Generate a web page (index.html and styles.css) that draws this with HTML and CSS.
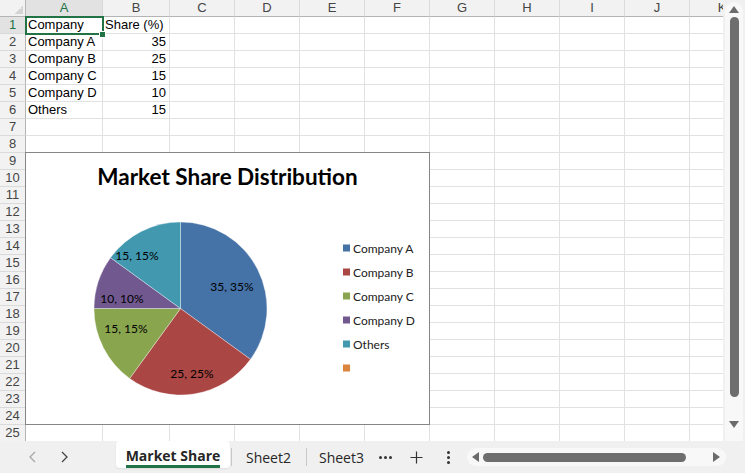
FILE: index.html
```html
<!DOCTYPE html>
<html>
<head>
<meta charset="utf-8">
<link rel="stylesheet" href="styles.css">
</head>
<body>
<div class="app">
  <div class="main">
    <div class="sheet">
      <div class="row hdr"><span class="corner"></span><span class="selh">A</span><span>B</span><span>C</span><span>D</span><span>E</span><span>F</span><span>G</span><span>H</span><span>I</span><span>J</span><span>K</span></div>
      <div class="row"><span class="rh selh">1</span><span>Company</span><span>Share (%)</span><span></span><span></span><span></span><span></span><span></span><span></span><span></span><span></span><span></span></div>
      <div class="row"><span class="rh">2</span><span>Company A</span><span class="num">35</span><span></span><span></span><span></span><span></span><span></span><span></span><span></span><span></span><span></span></div>
      <div class="row"><span class="rh">3</span><span>Company B</span><span class="num">25</span><span></span><span></span><span></span><span></span><span></span><span></span><span></span><span></span><span></span></div>
      <div class="row"><span class="rh">4</span><span>Company C</span><span class="num">15</span><span></span><span></span><span></span><span></span><span></span><span></span><span></span><span></span><span></span></div>
      <div class="row"><span class="rh">5</span><span>Company D</span><span class="num">10</span><span></span><span></span><span></span><span></span><span></span><span></span><span></span><span></span><span></span></div>
      <div class="row"><span class="rh">6</span><span>Others</span><span class="num">15</span><span></span><span></span><span></span><span></span><span></span><span></span><span></span><span></span><span></span></div>
      <div class="row"><span class="rh">7</span><span></span><span></span><span></span><span></span><span></span><span></span><span></span><span></span><span></span><span></span><span></span></div>
      <div class="row"><span class="rh">8</span><span></span><span></span><span></span><span></span><span></span><span></span><span></span><span></span><span></span><span></span><span></span></div>
      <div class="row"><span class="rh">9</span><span></span><span></span><span></span><span></span><span></span><span></span><span></span><span></span><span></span><span></span><span></span></div>
      <div class="row"><span class="rh">10</span><span></span><span></span><span></span><span></span><span></span><span></span><span></span><span></span><span></span><span></span><span></span></div>
      <div class="row"><span class="rh">11</span><span></span><span></span><span></span><span></span><span></span><span></span><span></span><span></span><span></span><span></span><span></span></div>
      <div class="row"><span class="rh">12</span><span></span><span></span><span></span><span></span><span></span><span></span><span></span><span></span><span></span><span></span><span></span></div>
      <div class="row"><span class="rh">13</span><span></span><span></span><span></span><span></span><span></span><span></span><span></span><span></span><span></span><span></span><span></span></div>
      <div class="row"><span class="rh">14</span><span></span><span></span><span></span><span></span><span></span><span></span><span></span><span></span><span></span><span></span><span></span></div>
      <div class="row"><span class="rh">15</span><span></span><span></span><span></span><span></span><span></span><span></span><span></span><span></span><span></span><span></span><span></span></div>
      <div class="row"><span class="rh">16</span><span></span><span></span><span></span><span></span><span></span><span></span><span></span><span></span><span></span><span></span><span></span></div>
      <div class="row"><span class="rh">17</span><span></span><span></span><span></span><span></span><span></span><span></span><span></span><span></span><span></span><span></span><span></span></div>
      <div class="row"><span class="rh">18</span><span></span><span></span><span></span><span></span><span></span><span></span><span></span><span></span><span></span><span></span><span></span></div>
      <div class="row"><span class="rh">19</span><span></span><span></span><span></span><span></span><span></span><span></span><span></span><span></span><span></span><span></span><span></span></div>
      <div class="row"><span class="rh">20</span><span></span><span></span><span></span><span></span><span></span><span></span><span></span><span></span><span></span><span></span><span></span></div>
      <div class="row"><span class="rh">21</span><span></span><span></span><span></span><span></span><span></span><span></span><span></span><span></span><span></span><span></span><span></span></div>
      <div class="row"><span class="rh">22</span><span></span><span></span><span></span><span></span><span></span><span></span><span></span><span></span><span></span><span></span><span></span></div>
      <div class="row"><span class="rh">23</span><span></span><span></span><span></span><span></span><span></span><span></span><span></span><span></span><span></span><span></span><span></span></div>
      <div class="row"><span class="rh">24</span><span></span><span></span><span></span><span></span><span></span><span></span><span></span><span></span><span></span><span></span><span></span></div>
      <div class="row"><span class="rh">25</span><span></span><span></span><span></span><span></span><span></span><span></span><span></span><span></span><span></span><span></span><span></span></div>

      <div class="selbox"></div>
      <div class="handle"></div>

      <div class="chart">
        <div class="chart-title">Market Share Distribution</div>
        <svg class="chart-svg" width="403" height="229" viewBox="0 0 403 229">
          <g class="slices">
            <path d="M154.5 113.5 L154.5 27 A86.5 86.5 0 0 1 224.48 164.35 Z" fill="#4572A7"/>
            <path d="M154.5 113.5 L224.48 164.35 A86.5 86.5 0 0 1 103.65 183.48 Z" fill="#AA4643"/>
            <path d="M154.5 113.5 L103.65 183.48 A86.5 86.5 0 0 1 68 113.5 Z" fill="#89A54E"/>
            <path d="M154.5 113.5 L68 113.5 A86.5 86.5 0 0 1 84.52 62.65 Z" fill="#71588F"/>
            <path d="M154.5 113.5 L84.52 62.65 A86.5 86.5 0 0 1 154.5 27 Z" fill="#4198AF"/>
          </g>
          <g class="labels">
            <text x="206" y="91">35, 35%</text>
            <text x="166" y="178">25, 25%</text>
            <text x="100" y="133">15, 15%</text>
            <text x="96" y="103">10, 10%</text>
            <text x="111" y="60">15, 15%</text>
          </g>
          <g class="legend">
            <rect x="317" y="49.5" width="7" height="7" fill="#4572A7"/>
            <text x="327" y="53">Company A</text>
            <rect x="317" y="73.5" width="7" height="7" fill="#AA4643"/>
            <text x="327" y="77">Company B</text>
            <rect x="317" y="97.5" width="7" height="7" fill="#89A54E"/>
            <text x="327" y="101">Company C</text>
            <rect x="317" y="121.5" width="7" height="7" fill="#71588F"/>
            <text x="327" y="125">Company D</text>
            <rect x="317" y="145.5" width="7" height="7" fill="#4198AF"/>
            <text x="327" y="149">Others</text>
            <rect x="317" y="169.5" width="7" height="7" fill="#DB843D"/>
          </g>
        </svg>
      </div>
    </div>
    <div class="vscroll">
      <div class="vpill">
        <svg class="arrow-up" width="10" height="7" viewBox="0 0 10 7"><path d="M5 0 L10 7 L0 7 Z" fill="#6b6b6b"/></svg>
        <div class="vthumb"></div>
        <div class="vspace"></div>
        <svg class="arrow-down" width="10" height="7" viewBox="0 0 10 7"><path d="M0 0 L10 0 L5 7 Z" fill="#6b6b6b"/></svg>
      </div>
    </div>
  </div>
  <div class="tabs">
    <div class="nav nav-first"><svg width="7" height="12" viewBox="0 0 7 12"><path d="M6 1 L1 6 L6 11" fill="none" stroke="#a8a8a8" stroke-width="1.3"/></svg></div>
    <div class="nav"><svg width="7" height="12" viewBox="0 0 7 12"><path d="M1 1 L6 6 L1 11" fill="none" stroke="#444" stroke-width="1.3"/></svg></div>
    <div class="tab tab-active"><span class="tab-label">Market Share</span></div>
    <div class="sep"></div>
    <div class="tab tab-2">Sheet2</div>
    <div class="sep"></div>
    <div class="tab tab-3">Sheet3</div>
    <div class="more"><span></span><span></span><span></span></div>
    <div class="plus"><svg width="13" height="13" viewBox="0 0 13 13"><path d="M6.5 0.5 V12.5 M0.5 6.5 H12.5" stroke="#333" stroke-width="1.2"/></svg></div>
    <div class="vdots"><span></span><span></span><span></span></div>
    <div class="hpill">
      <svg width="7" height="10" viewBox="0 0 7 10"><path d="M7 0 L7 10 L0 5 Z" fill="#6b6b6b"/></svg>
      <div class="hthumb"></div>
      <svg width="7" height="10" viewBox="0 0 7 10"><path d="M0 0 L7 5 L0 10 Z" fill="#6b6b6b"/></svg>
    </div>
  </div>
</div>
</body>
</html>
```

FILE: styles.css
```css
* { box-sizing: border-box; }

body {
  margin: 0;
  width: 745px;
  height: 473px;
  overflow: hidden;
  background: #fff;
  font-family: "Liberation Sans", Arial, sans-serif;
}

.app {
  display: flex;
  flex-direction: column;
  height: 473px;
}

.main {
  display: flex;
  height: 441px;
}

.sheet {
  position: relative;
  width: 723px;
  height: 441px;
  overflow: hidden;
}

.row {
  display: grid;
  grid-template-columns: 26px 77px 67px repeat(9, 65px);
  height: 17px;
}

.row > span {
  border-right: 1px solid #e1e1e1;
  border-bottom: 1px solid #e1e1e1;
  font-size: 13px;
  line-height: 16px;
  padding: 0 2px;
  white-space: nowrap;
  overflow: hidden;
  color: #000;
}

.row > span.num {
  text-align: right;
  padding-right: 3px;
}

.hdr > span {
  background: #f2f2f2;
  border-bottom-color: #b4b4b4;
  border-right-color: #dadada;
  text-align: center;
  color: #454545;
}

.row > span.rh {
  background: #f2f2f2;
  text-align: center;
  color: #454545;
  border-right-color: #b4b4b4;
  border-bottom-color: #dadada;
  padding: 0;
}

.hdr > span.corner {
  border-right-color: #b4b4b4;
  background: #f2f2f2 linear-gradient(135deg, transparent 50%, #d4d4d4 50%) no-repeat right 2px bottom 2px / 8px 8px;
}

.row > span.selh {
  background-color: #e2e2e2;
  color: #217346;
}

.selbox {
  position: absolute;
  left: 25px;
  top: 16px;
  width: 79px;
  height: 19px;
  border: 2px solid #217346;
}

.handle {
  position: absolute;
  left: 99px;
  top: 31px;
  width: 7px;
  height: 7px;
  background: #217346;
  border: 1px solid #fff;
}

.chart {
  position: absolute;
  left: 25px;
  top: 152px;
  width: 405px;
  height: 273px;
  background: #fff;
  border: 1px solid #868686;
  display: flex;
  flex-direction: column;
}

.chart-title {
  height: 42px;
  padding-top: 12px;
  text-align: center;
  font-family: Lato, "Liberation Sans", sans-serif;
  font-weight: bold;
  font-size: 22.5px;
  line-height: 24px;
  color: #000;
}

.chart-svg {
  display: block;
}

.slices path {
  stroke: #fff;
  stroke-opacity: 0.45;
  stroke-width: 0.8;
}

.labels text {
  font-family: Lato, "Liberation Sans", sans-serif;
  font-size: 12px;
  fill: #000;
  text-anchor: middle;
  dominant-baseline: central;
}

.legend text {
  font-family: Lato, "Liberation Sans", sans-serif;
  font-size: 12px;
  fill: #222;
  dominant-baseline: central;
}

.vscroll {
  width: 22px;
  height: 441px;
  background: #f0f0f0;
  padding: 2px 2px 0 2px;
}

.vpill {
  height: 446px;
  background: #f8f8f8;
  border-radius: 9px;
  display: flex;
  flex-direction: column;
  align-items: center;
  padding-top: 4px;
}

.arrow-up { display: block; }

.vthumb {
  margin-top: 4px;
  width: 9px;
  height: 380px;
  background: #6e6e6e;
  border-radius: 5px;
}

.vspace { flex: 0 0 24px; }

.arrow-down { display: block; }

.tabs {
  height: 32px;
  background: #f0f0f0;
  display: flex;
  align-items: center;
  font-family: "Open Sans", "Liberation Sans", sans-serif;
  color: #262626;
}

.nav {
  width: 32px;
  height: 24px;
  display: flex;
  align-items: center;
  justify-content: center;
}

.nav-first { margin-left: 16px; }

.tab {
  height: 27px;
  display: flex;
  align-items: center;
  justify-content: center;
  font-size: 14px;
}

.tab-active {
  align-self: flex-start;
  margin-left: 36px;
  width: 114px;
  background: #fff;
  border-radius: 4px;
  font-weight: bold;
  box-shadow: 0 1px 2px rgba(0,0,0,0.08);
}

.tab-label {
  border-bottom: 3px solid #217346;
  line-height: 19px;
  padding-top: 2px;
  margin-top: 2px;
}

.sep {
  width: 1px;
  height: 18px;
  background: #c8c8c8;
  margin-left: 1px;
}

.tab-2 { width: 73px; }
.tab-3 { width: 69px; }

.more {
  width: 24px;
  display: flex;
  justify-content: center;
  gap: 2px;
  margin-left: -3px;
}

.more span, .vdots span {
  width: 3px;
  height: 3px;
  background: #333;
  border-radius: 50%;
}

.plus {
  width: 24px;
  margin-left: 7px;
  display: flex;
  justify-content: center;
}

.plus svg { display: block; }

.vdots {
  width: 16px;
  margin-left: 12px;
  display: flex;
  flex-direction: column;
  align-items: center;
  gap: 2px;
}

.hpill {
  flex: 0 0 259px;
  margin-left: 11px;
  height: 18px;
  background: #f8f8f8;
  border-radius: 9px;
  display: flex;
  align-items: center;
  padding: 0 6px 0 5px;
}

.hpill svg { display: block; flex: 0 0 auto; }

.hthumb {
  margin-left: 4px;
  width: 203px;
  height: 9px;
  background: #6e6e6e;
  border-radius: 5px;
  margin-right: auto;
}
```
